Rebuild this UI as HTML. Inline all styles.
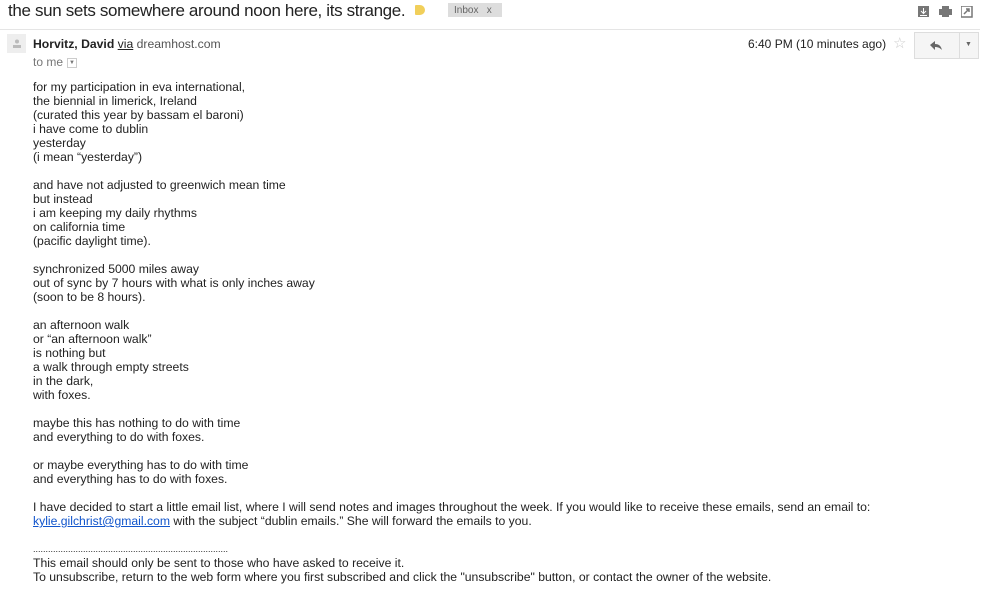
<!DOCTYPE html>
<html><head><meta charset="utf-8"><style>
body{margin:0;background:#fff;font-family:"Liberation Sans",Arial,sans-serif;color:#222;width:994px;height:603px;overflow:hidden;position:relative}
.a{position:absolute;white-space:nowrap}
.body{position:absolute;left:33px;top:80px;font-size:12.2px;line-height:14px;color:#222}
.body div{height:14px;white-space:nowrap}
a{color:#15c;text-decoration:underline}
</style></head><body>
<div class="a" style="left:8px;top:0;font-size:17px;letter-spacing:-0.35px;line-height:21px;color:#222">the sun sets somewhere around noon here, its strange.</div>
<div class="a" style="left:415px;top:5px;width:10px;height:10px;background:#f1cf5a;border-radius:1px 5px 5px 1px"></div>
<div class="a" style="left:448px;top:3px;width:54px;height:14px;background:#ddd;font-size:10px;line-height:15px;color:#666;padding-left:6px;box-sizing:border-box">Inbox &nbsp;&nbsp;x</div>
<svg class="a" style="left:918px;top:6px" width="12" height="12"><rect width="11" height="11" fill="#777"/><path d="M5.5 2v5M3 5l2.5 2.5L8 5" stroke="#fff" fill="none"/><rect x="2" y="9" width="7" height="1" fill="#fff"/></svg>
<svg class="a" style="left:939px;top:6px" width="14" height="12"><rect x="3" y="0" width="7" height="3" fill="#777"/><rect x="0" y="3" width="13" height="6" fill="#777"/><rect x="3" y="7" width="7" height="4" fill="#777"/></svg>
<svg class="a" style="left:961px;top:6px" width="12" height="12"><rect width="11" height="11" fill="none" stroke="#777" stroke-width="1.5"/><path d="M3 8l5-5M5 3h3v3" stroke="#777" fill="none" stroke-width="1.5"/></svg>
<div class="a" style="left:0;top:29px;width:980px;height:1px;background:#e5e5e5"></div>
<div class="a" style="left:7px;top:34px;width:19px;height:19px;background:#eee"></div>
<svg class="a" style="left:12px;top:39px" width="10" height="9"><circle cx="5" cy="2.5" r="2" fill="#bbb"/><rect x="1" y="6" width="8" height="3" fill="#bbb"/></svg>
<div class="a" style="left:33px;top:37px;font-size:12.2px;line-height:15px"><b>Horvitz, David</b> <span style="text-decoration:underline">via</span> <span style="color:#555">dreamhost.com</span></div>
<div class="a" style="left:33px;top:55px;font-size:12px;line-height:15px;color:#777">to me</div>
<div class="a" style="left:67px;top:58px;width:8px;height:8px;border:1px solid #ccc;font-size:6px;line-height:8px;text-align:center;color:#777">▼</div>
<div class="a" style="left:748px;top:37px;font-size:12px;line-height:15px">6:40 PM (10 minutes ago)</div>
<div class="a" style="left:893px;top:34px;font-size:15px;color:#ccc">☆</div>
<div class="a" style="left:914px;top:32px;width:65px;height:27px;border:1px solid #ddd;background:#f5f5f5;box-sizing:border-box"></div>
<div class="a" style="left:959px;top:33px;width:1px;height:25px;background:#ddd"></div>
<svg class="a" style="left:929px;top:40px" width="14" height="11"><path d="M1 5L6 1v3c4 0 6 2 7 6c-2-2-4-3-7-3v3z" fill="#666"/></svg>
<div class="a" style="left:965px;top:41px;font-size:7px;color:#666">▼</div>
<div class="body">
<div>for my participation in eva international,</div>
<div>the biennial in limerick, Ireland</div>
<div>(curated this year by bassam el baroni)</div>
<div>i have come to dublin</div>
<div>yesterday</div>
<div>(i mean “yesterday”)</div>
<div></div>
<div>and have not adjusted to greenwich mean time</div>
<div>but instead</div>
<div>i am keeping my daily rhythms</div>
<div>on california time</div>
<div>(pacific daylight time).</div>
<div></div>
<div>synchronized 5000 miles away</div>
<div>out of sync by 7 hours with what is only inches away</div>
<div>(soon to be 8 hours).</div>
<div></div>
<div>an afternoon walk</div>
<div>or “an afternoon walk”</div>
<div>is nothing but</div>
<div>a walk through empty streets</div>
<div>in the dark,</div>
<div>with foxes.</div>
<div></div>
<div>maybe this has nothing to do with time</div>
<div>and everything to do with foxes.</div>
<div></div>
<div>or maybe everything has to do with time</div>
<div>and everything has to do with foxes.</div>
<div></div>
<div>I have decided to start a little email list, where I will send notes and images throughout the week. If you would like to receive these emails, send an email to:</div>
<div><a>kylie.gilchrist@gmail.com</a> with the subject “dublin emails.” She will forward the emails to you.</div>
<div></div>
<div style="font-size:9px;letter-spacing:0px">..............................................................................</div>
<div>This email should only be sent to those who have asked to receive it.</div>
<div>To unsubscribe, return to the web form where you first subscribed and click the "unsubscribe" button, or contact the owner of the website.</div>
</div>
</body></html>
